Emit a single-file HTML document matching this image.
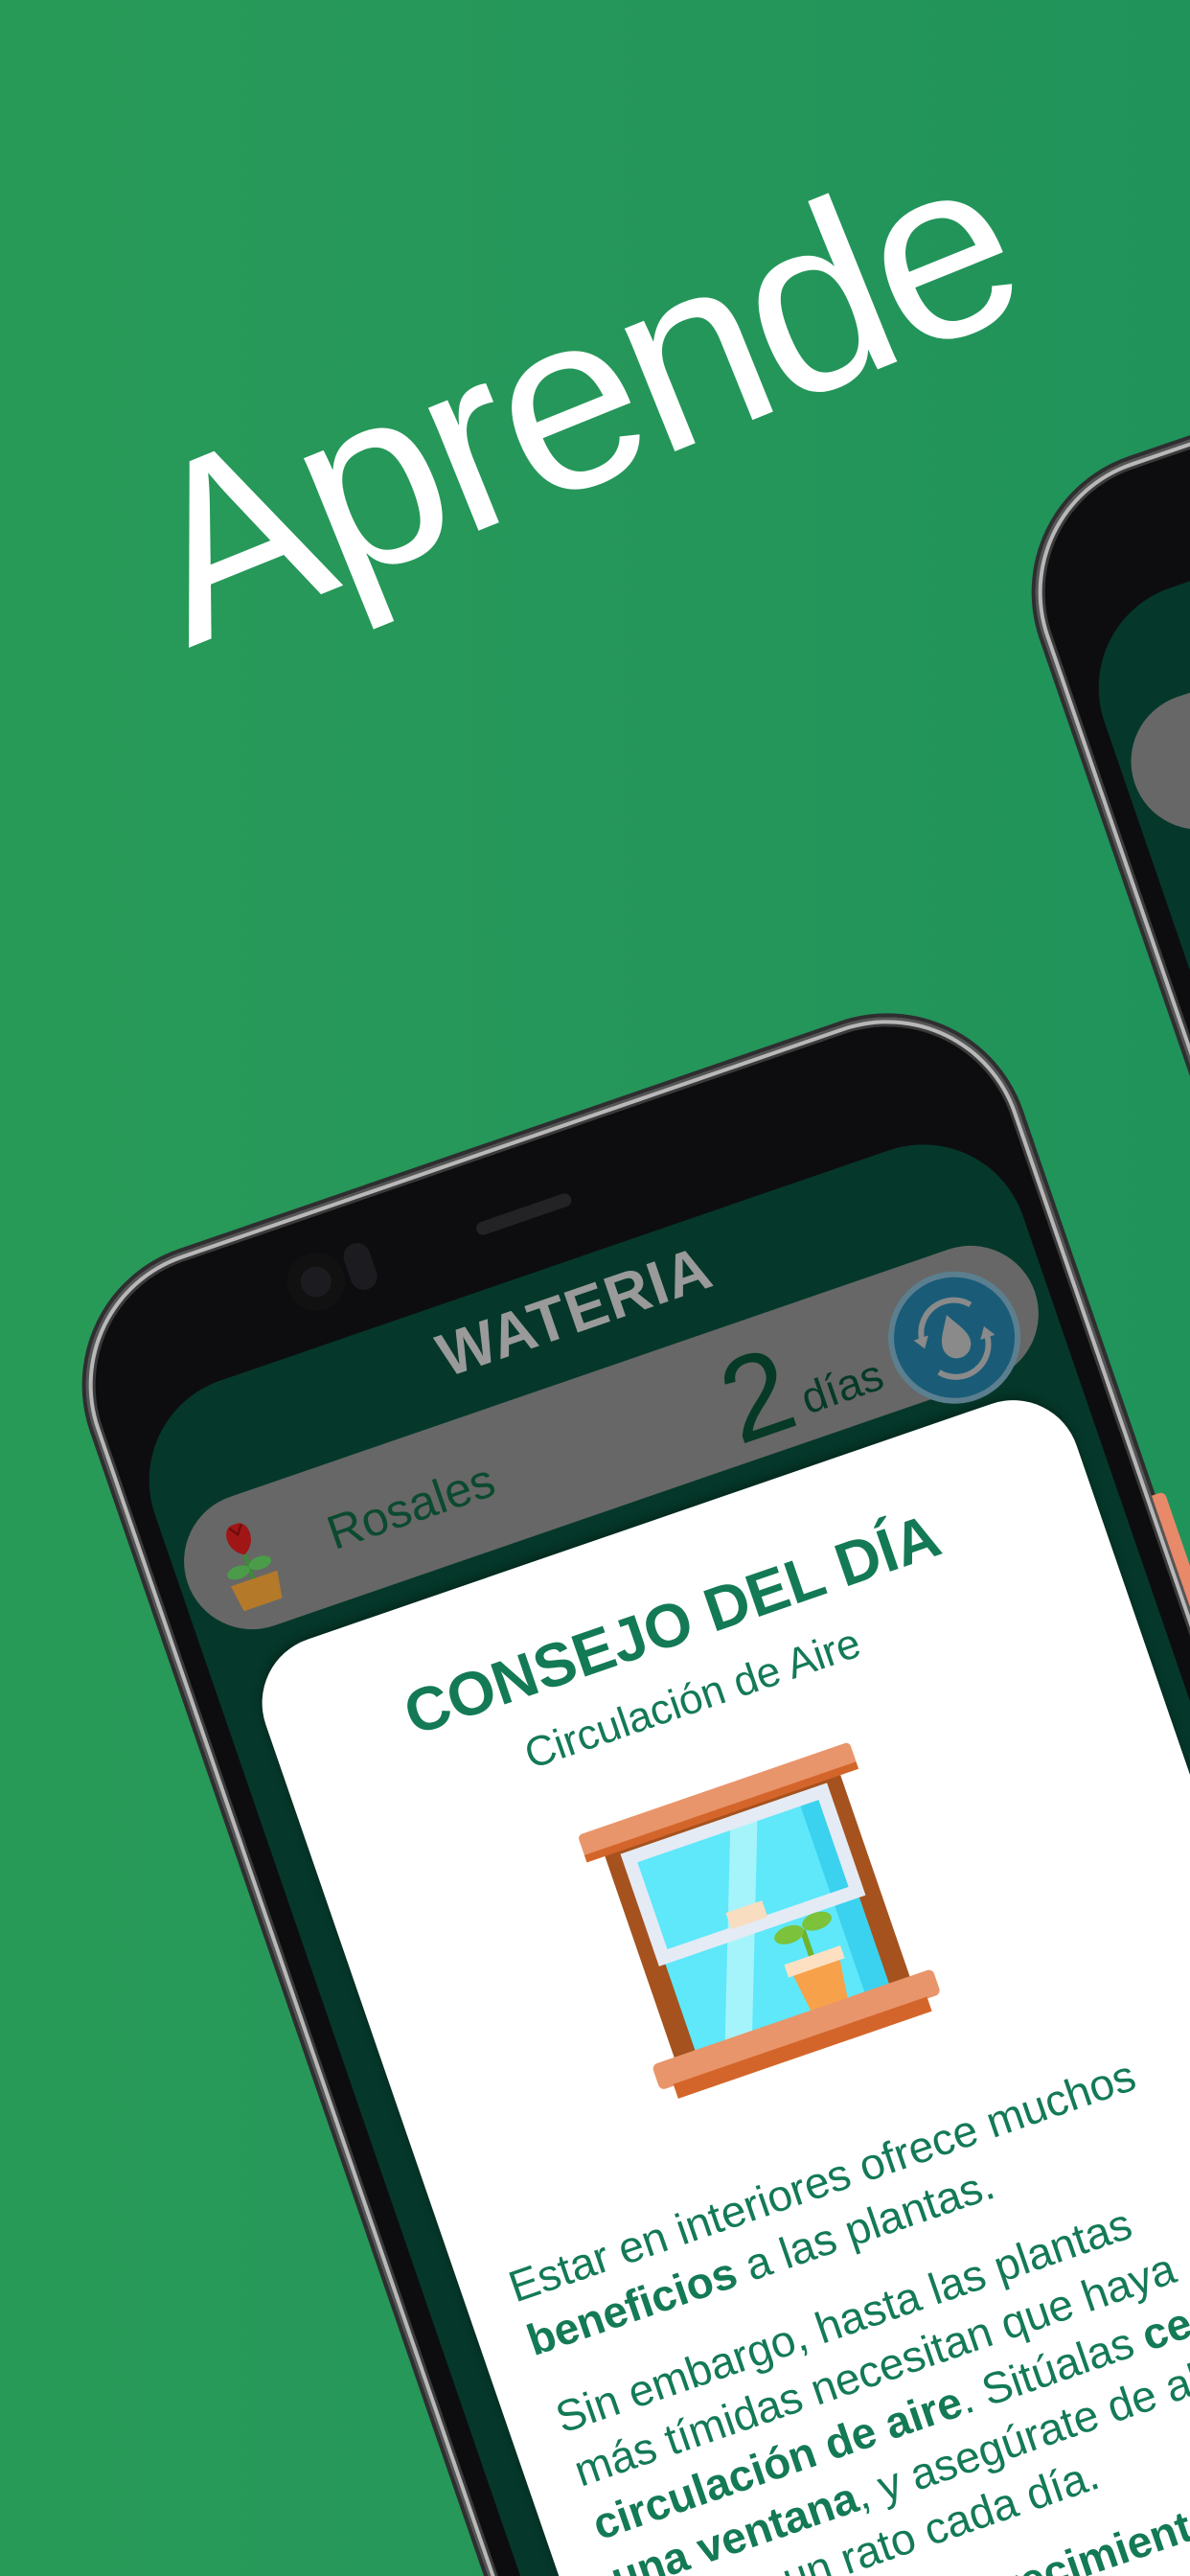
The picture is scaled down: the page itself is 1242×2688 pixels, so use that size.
<!DOCTYPE html>
<html><head><meta charset="utf-8"><style>
*{margin:0;padding:0;box-sizing:border-box}
html,body{width:1242px;height:2688px;overflow:hidden}
body{position:relative;background:linear-gradient(90deg,#289a58 0%,#25965a 60%,#1f935a 100%);font-family:"Liberation Sans",sans-serif}
.aprende{position:absolute;left:197px;top:455px;font-size:262px;line-height:262px;color:#fff;white-space:nowrap;transform-origin:0 222px;transform:rotate(-22deg);letter-spacing:-6px}
.phone{position:absolute;width:1030px;height:2100px;transform-origin:0 0;transform:rotate(-19deg);border-radius:150px;background:#0d0d0f;border:4px solid #2e2e30;box-shadow:inset 0 0 0 3px #555,inset 0 0 0 7px #b8b8b8,inset 0 0 0 10px #3a3a3a,inset 0 0 0 12px #0d0d0f}
.screen{position:absolute;left:32px;right:32px;top:140px;bottom:40px;background:#05382a;border-radius:110px;overflow:hidden}
.pill{position:absolute;left:9px;top:118px;width:935px;height:142px;border-radius:71px;background:#676767}
.btn{position:absolute;left:780px;top:138px;width:138px;height:138px;border-radius:50%;background:#1a5c78;border:6px solid #5c7f8f}
.card{position:absolute;left:38px;top:285px;width:895px;height:1900px;background:#fff;border-radius:70px;box-shadow:0 -4px 10px rgba(0,0,0,.3)}
.tx{position:absolute;white-space:nowrap;color:#137a55}
b{font-weight:bold}
.clip{position:absolute;left:0;top:0;width:1242px;height:2688px;overflow:hidden}
</style></head><body>
<div class="clip">
<div class="aprende">Aprende</div>

<div class="phone" style="left:1036px;top:525px">
  <div class="screen"><div class="pill" style="top:110px"></div></div>
</div>

<div class="phone" style="left:45px;top:1352px">
  <div style="position:absolute;left:1022px;top:570px;width:14px;height:130px;background:#e8896a;border-radius:0 6px 6px 0"></div>
  <div style="position:absolute;left:240px;top:45px;width:60px;height:60px;border-radius:50%;background:#1c1c20;box-shadow:inset 0 0 0 14px #111"></div>
  <div style="position:absolute;left:305px;top:50px;width:28px;height:50px;border-radius:14px;background:#1c1c20"></div>
  <div style="position:absolute;left:446px;top:72px;width:104px;height:14px;border-radius:7px;background:#232326"></div>
  <div class="screen">
    <div class="tx" style="left:0;width:966px;text-align:center;top:15px;font-size:64px;font-weight:bold;color:#9a9a9a;letter-spacing:1px">WATERIA</div>
    <div class="pill"></div>
    <svg style="position:absolute;left:40px;top:140px" width="70" height="100" viewBox="0 0 60 90">
      <path d="M30 6 C16 4 14 28 30 36 C46 28 44 4 30 6Z" fill="#a01616"/>
      <path d="M24 8 L30 16 L36 8" stroke="#6d0c0c" stroke-width="2" fill="none"/>
      <path d="M30 36 V62" stroke="#3c8a3a" stroke-width="4"/>
      <ellipse cx="19" cy="50" rx="11" ry="6" fill="#4a9c48"/><ellipse cx="41" cy="48" rx="11" ry="6" fill="#4a9c48"/>
      <path d="M8 60 H54 L50 86 H12Z" fill="#b5792a"/>
    </svg>
    <div class="tx" style="left:165px;top:160px;font-size:50px;color:#0c4a30">Rosales</div>
    <div class="tx" style="left:600px;top:130px;font-size:125px;line-height:135px;color:#063a26">2</div>
    <div class="tx" style="left:678px;top:190px;font-size:46px;color:#063a26">días</div>
    <div class="btn">
      <svg width="126" height="126" viewBox="0 0 126 126">
        <path d="M63 38 C55 52 48 60 48 70 A15 15 0 0 0 78 70 C78 60 71 52 63 38Z" fill="#8a8a8a"/>
        <path d="M30 58 A34 34 0 0 1 90 36" stroke="#8a8a8a" stroke-width="6" fill="none"/>
        <path d="M96 68 A34 34 0 0 1 36 92" stroke="#8a8a8a" stroke-width="6" fill="none"/>
        <path d="M22 52 L30 64 L38 52Z" fill="#8a8a8a"/><path d="M88 74 L96 62 L104 74Z" fill="#8a8a8a"/>
      </svg>
    </div>
    <div class="card">
      <div class="tx" style="left:0;width:870px;text-align:center;top:72px;font-size:64px;font-weight:bold">CONSEJO DEL DÍA</div>
      <div class="tx" style="left:0;width:860px;text-align:center;top:165px;font-size:44px">Circulación de Aire</div>
      <svg style="position:absolute;left:255px;top:285px" width="330" height="310" viewBox="0 0 330 310">
        <rect x="35" y="20" width="260" height="250" fill="#a5521e"/>
        <rect x="58" y="40" width="214" height="215" fill="#5ee8fa"/>
        <rect x="245" y="40" width="27" height="215" fill="#3ad2ee"/>
        <polygon points="90,255 170,40 200,40 120,255" fill="#a6f4fb"/>
        <rect x="58" y="40" width="214" height="110" fill="none" stroke="#e4ebf5" stroke-width="14"/>
        <rect x="135" y="127" width="40" height="18" fill="#f8ddc0"/>
        <path d="M205 200 V170" stroke="#6fb22e" stroke-width="6"/>
        <ellipse cx="190" cy="170" rx="16" ry="9" fill="#7cc23a"/><ellipse cx="222" cy="166" rx="16" ry="9" fill="#7cc23a"/>
        <polygon points="180,210 232,210 226,255 186,255" fill="#f7a24a"/>
        <rect x="175" y="198" width="62" height="14" fill="#fde0c2"/>
        <rect x="15" y="0" width="300" height="26" rx="5" fill="#e9956b"/>
        <rect x="15" y="22" width="300" height="8" fill="#d4652a"/>
        <rect x="10" y="252" width="310" height="28" rx="6" fill="#e9956b"/>
        <rect x="25" y="278" width="280" height="16" fill="#d4652a"/>
      </svg>
      <div class="tx" style="left:50px;top:680px;font-size:46px;line-height:59px">Estar en interiores ofrece muchos<br><b>beneficios</b> a las plantas.</div>
      <div class="tx" style="left:52px;top:825px;font-size:46px;line-height:59px">Sin embargo, hasta las plantas<br>más tímidas necesitan que haya<br><b>circulación de aire</b>. Sitúalas <b>cerca de</b><br><b>una ventana</b>, y asegúrate de abrirla<br>durante un rato cada día.</div>
      <div class="tx" style="left:52px;top:1144px;font-size:46px;line-height:59px">Esto aumenta su <b>crecimiento</b> y vitalidad.</div>
    </div>
  </div>
</div>
</div>
</body></html>
